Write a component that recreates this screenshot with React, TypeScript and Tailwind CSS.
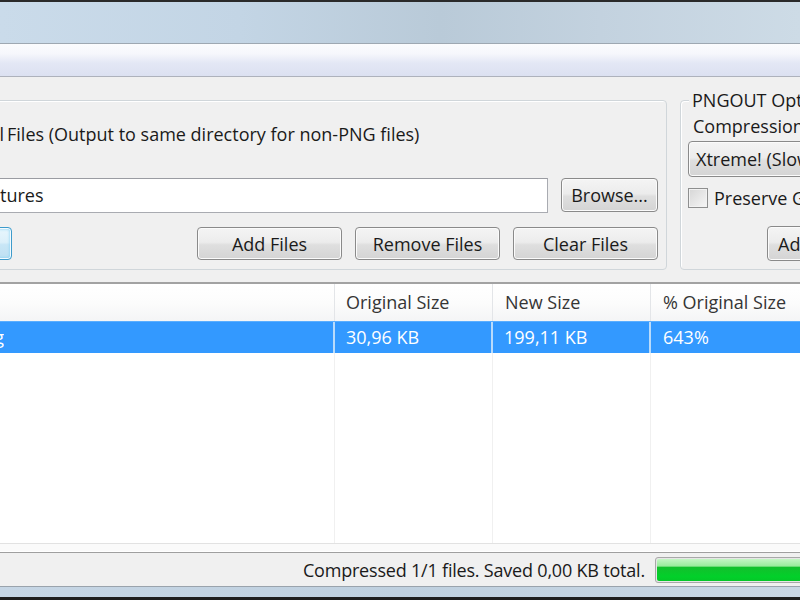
import React from "react";

const btn =
  "shrink-0 flex items-center justify-center rounded-[4px] border border-[#8a8a8a] bg-[linear-gradient(#f4f4f4,#ececec_46%,#dfdfdf_54%,#d4d4d4)] shadow-[inset_0_0_0_1px_#fbfbfb] text-[18px] leading-none text-[#1a1a1a]";

export default function App() {
  return (
    <div className="w-[800px] h-[600px] overflow-hidden bg-[#f0f0f0] flex flex-col font-['Open_Sans',sans-serif] text-[18px] text-[#1a1a1a]">
      {/* window top frame */}
      <div className="h-[2px] shrink-0 bg-[#2a2a2a]" />
      <div className="h-[41px] shrink-0 bg-[linear-gradient(90deg,#cadbea,#c3d5e5_30%,#b9cad8_55%,#c3d2df_75%,#cddbe6)]" />
      <div className="h-[1px] shrink-0 bg-[#9ea8b2]" />
      <div className="h-[32px] shrink-0 bg-[linear-gradient(#fbfcfe,#f6f7fc_30%,#e3e7f5_60%,#dce1f1)]" />
      <div className="h-[1px] shrink-0 bg-[#aeb2bc]" />

      {/* content */}
      <div className="h-[475px] shrink-0 flex flex-col overflow-hidden">
        <div className="h-[23px] shrink-0" />
        {/* group boxes */}
        <div className="h-[170px] shrink-0 flex gap-[13px] -ml-[130px] w-[1060px]">
          {/* left group */}
          <div className="w-[797px] shrink-0 h-full rounded-[4px] border border-[#d0d6da] shadow-[inset_1px_1px_0_#ffffff] flex flex-col pr-[8px]">
            <div className="h-[21px] shrink-0" />
            <div className="h-[24px] shrink-0 flex items-center whitespace-nowrap">
              <div className="w-[133px] shrink-0 overflow-hidden flex justify-end">
                <span>Optimize All</span>
              </div>
              <span className="ml-[3px]">Files (Output to same directory for non-PNG files)</span>
            </div>
            <div className="h-[32px] shrink-0" />
            <div className="h-[35px] shrink-0 flex gap-[13px]">
              <div className="flex-1 h-full border border-[#a9abb1] border-t-[#9a9ca2] bg-white flex items-center whitespace-nowrap">
                <div className="w-[128px] shrink-0 overflow-hidden flex justify-end">
                  <span>C:\Users\Public\Pic</span>
                </div>
                <span>tures</span>
              </div>
              <div className={btn + " w-[97px] h-[34px]"}>Browse...</div>
            </div>
            <div className="h-[14px] shrink-0" />
            <div className="h-[33px] shrink-0 flex gap-[13px]">
              <div className="w-[141px] shrink-0 h-full rounded-[4px] border border-[#3d9bcb] bg-[linear-gradient(#e8f6fd,#dcf0fa_46%,#c8e6f6_54%,#bfe0f2)] shadow-[inset_0_0_0_1px_#f4fbff,inset_0_0_3px_1px_#7fd0f2] flex items-center justify-center">
                Optimize
              </div>
              <div className="flex-1" />
              <div className={btn + " w-[145px] h-full"}>Add Files</div>
              <div className={btn + " w-[145px] h-full"}>Remove Files</div>
              <div className={btn + " w-[145px] h-full"}>Clear Files</div>
            </div>
          </div>

          {/* right group */}
          <div className="relative w-[250px] shrink-0 h-full rounded-[4px] border border-[#d0d6da] shadow-[inset_1px_1px_0_#ffffff] flex flex-col pl-[7px]">
            <div className="absolute left-[8px] -top-[13px] h-[24px] px-[3px] bg-[#f0f0f0] flex items-center whitespace-nowrap">
              PNGOUT Options
            </div>
            <div className="h-[13px] shrink-0" />
            <div className="h-[24px] shrink-0 flex items-center pl-[5px] whitespace-nowrap">Compression Level:</div>
            <div className="h-[3px] shrink-0" />
            <div className="h-[36px] shrink-0 w-[230px] rounded-[4px] border border-[#8a8a8a] bg-[linear-gradient(#f4f4f4,#ececec_46%,#dfdfdf_54%,#d4d4d4)] shadow-[inset_0_0_0_1px_#fbfbfb] flex items-center pl-[7px] whitespace-nowrap">
              Xtreme! (Slowest)
            </div>
            <div className="h-[11px] shrink-0" />
            <div className="h-[20px] shrink-0 flex items-center gap-[6px] whitespace-nowrap">
              <div className="w-[20px] h-[20px] shrink-0 border border-[#8e8f8f] bg-[linear-gradient(135deg,#d6d6d6,#f6f6f6)] shadow-[inset_0_0_0_1px_#f2f2f2]" />
              <span>Preserve Gamma</span>
            </div>
            <div className="h-[18px] shrink-0" />
            <div className="h-[35px] shrink-0 flex">
              <div className={btn + " ml-[79px] w-[130px] h-full justify-start pl-[10px]"}>Advanced...</div>
            </div>
          </div>
        </div>

        <div className="h-[12px] shrink-0" />

        {/* list view */}
        <div className="h-[270px] shrink-0 flex flex-col -ml-[130px] w-[1060px] bg-white border-t-2 border-[#a2a2a2]">
          {/* header */}
          <div className="h-[37px] shrink-0 flex bg-[linear-gradient(#ffffff,#fcfcfc_50%,#f4f5f6)] text-[#353535] whitespace-nowrap">
            <div className="w-[465px] shrink-0 border-r border-[#e3e5e8] flex items-center pl-[8px]">File</div>
            <div className="w-[158px] shrink-0 border-r border-[#e3e5e8] flex items-center pl-[11px]">Original Size</div>
            <div className="w-[158px] shrink-0 border-r border-[#e3e5e8] flex items-center pl-[12px]">New Size</div>
            <div className="flex-1 flex items-center pl-[12px]">% Original Size</div>
          </div>
          {/* selected row */}
          <div className="h-[32px] shrink-0 flex bg-[#3399ff] text-white whitespace-nowrap border-t border-[#5aaeff]">
            <div className="w-[465px] shrink-0 border-r-2 border-[#b9dbfb] flex items-center">
              <div className="w-[134px] shrink-0 overflow-hidden flex justify-end">
                <span>image.png</span>
              </div>
            </div>
            <div className="w-[158px] shrink-0 border-r-2 border-[#b9dbfb] flex items-center pl-[11px]">30,96 KB</div>
            <div className="w-[158px] shrink-0 border-r-2 border-[#b9dbfb] flex items-center pl-[11px]">199,11 KB</div>
            <div className="flex-1 flex items-center pl-[12px]">643%</div>
          </div>
          {/* empty body */}
          <div className="h-[190px] shrink-0 flex">
            <div className="w-[465px] shrink-0 border-r border-[#f0f0f0]" />
            <div className="w-[158px] shrink-0 border-r border-[#f0f0f0]" />
            <div className="w-[158px] shrink-0 border-r border-[#f0f0f0]" />
            <div className="flex-1" />
          </div>
          <div className="h-[1px] shrink-0 bg-[#e2e2e2]" />
          <div className="h-[7px] shrink-0 bg-[#fafafa]" />
        </div>
      </div>

      {/* status bar */}
      <div className="h-[1px] shrink-0 bg-[#9f9f9f]" />
      <div className="h-[33px] shrink-0 flex overflow-hidden whitespace-nowrap">
        <div className="w-[645px] shrink-0 h-full flex items-center justify-end pt-[1px] tracking-[-0.2px]">
          Compressed 1/1 files. Saved 0,00 KB total.
        </div>
        <div className="ml-[10px] mt-[4px] w-[170px] h-[26px] shrink-0 rounded-[3px] border border-[#a8a8a8] bg-[#e6e6e6] p-[1px]">
          <div className="w-full h-full rounded-[2px] bg-[linear-gradient(#c4f6c4,#9aeb9c_32%,#12c02c_38%,#02d02a_80%,#05c728)]" />
        </div>
      </div>

      {/* window bottom frame */}
      <div className="h-[1px] shrink-0 bg-[#9aa3ac]" />
      <div className="h-[10px] shrink-0 bg-[linear-gradient(90deg,#c6d6e5,#bfd0df_50%,#c9d7e4)]" />
      <div className="flex-1 bg-[#1e1e1e]" />
    </div>
  );
}
